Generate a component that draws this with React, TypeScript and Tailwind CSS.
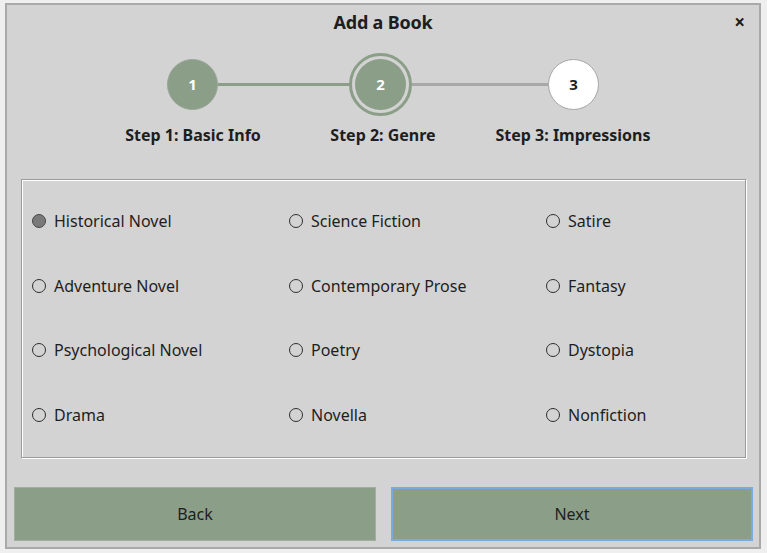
import React, { useState } from 'react';

const genres = [
  'Historical Novel',
  'Science Fiction',
  'Satire',
  'Adventure Novel',
  'Contemporary Prose',
  'Fantasy',
  'Psychological Novel',
  'Poetry',
  'Dystopia',
  'Drama',
  'Novella',
  'Nonfiction',
];

const font = { fontFamily: '"Noto Sans", "Open Sans", sans-serif' };

export default function App() {
  const [selected, setSelected] = useState('Historical Novel');

  return (
    <div className="w-[767px] h-[553px] bg-[#efefef] pt-[3px] pl-[5px]" style={font}>
      <div className="w-[756px] h-[546px] bg-[#d3d3d3] border-2 border-[#a9a9a9] flex flex-col text-[#1e1e1e]">
        {/* Title bar */}
        <div className="relative h-[34px] flex items-center justify-center">
          <span className="text-[18px] font-bold tracking-[-0.2px]">Add a Book</span>
          <span className="absolute right-[14px] top-[5px] text-[19px] font-bold leading-[24px]">×</span>
        </div>

        {/* Stepper */}
        <div className="relative h-[110px]">
          <div className="absolute left-[211px] top-[44px] w-[140px] h-[3px] bg-[#8b9e88]" />
          <div className="absolute left-[405px] top-[44px] w-[142px] h-[3px] bg-[#a8a8a8]" />
          <div className="absolute left-[160px] top-[20px] w-[51px] h-[51px] rounded-full bg-[#8b9e88] border border-[#9aa699] flex items-center justify-center text-white font-bold text-[15px]">
            1
          </div>
          <div className="absolute left-[342px] top-[14px] w-[63px] h-[63px] rounded-full border-[3px] border-[#8b9e88] bg-[#d3d3d3] flex items-center justify-center">
            <div className="w-[51px] h-[51px] rounded-full bg-[#8b9e88] flex items-center justify-center text-white font-bold text-[15px]">
              2
            </div>
          </div>
          <div className="absolute left-[541px] top-[20px] w-[51px] h-[51px] rounded-full bg-white border border-[#a6a6a6] flex items-center justify-center font-bold text-[15px] text-[#1e1e1e]">
            3
          </div>
          <div className="absolute left-[86px] top-[84px] w-[200px] text-center font-bold text-[16px]">Step 1: Basic Info</div>
          <div className="absolute left-[276px] top-[84px] w-[200px] text-center font-bold text-[16px]">Step 2: Genre</div>
          <div className="absolute left-[466px] top-[84px] w-[200px] text-center font-bold text-[16px]">Step 3: Impressions</div>
        </div>

        {/* Genre frame */}
        <div className="ml-[14px] mr-[13px] mt-[30px] h-[279px] border border-[#9a9a9a] shadow-[inset_1px_1px_0_#ffffff,1px_1px_0_#ffffff] grid grid-cols-[257px_257px_1fr] content-start pt-[29px] pl-[10px]">
          {genres.map((g) => (
            <label
              key={g}
              onClick={() => setSelected(g)}
              className="h-[64.5px] flex items-start gap-[8px] cursor-pointer text-[16px]"
            >
              <span
                className={`mt-[5px] w-[14px] h-[14px] shrink-0 rounded-full border-[1.7px] ${
                  selected === g ? 'bg-[#7a7a7a] border-[#474747]' : 'bg-transparent border-[#2e2e2e]'
                }`}
              />
              <span className="leading-[24px]">{g}</span>
            </label>
          ))}
        </div>

        {/* Buttons */}
        <div className="flex gap-[15px] pl-[7px] mt-[29px]">
          <button className="w-[362px] h-[54px] bg-[#8b9e88] border border-[#a2aea0] text-[16px] text-[#1e1e1e]">
            Back
          </button>
          <button className="w-[362px] h-[54px] bg-[#8b9e88] border-2 border-[#78acde] text-[16px] text-[#1e1e1e]">
            Next
          </button>
        </div>
      </div>
    </div>
  );
}
